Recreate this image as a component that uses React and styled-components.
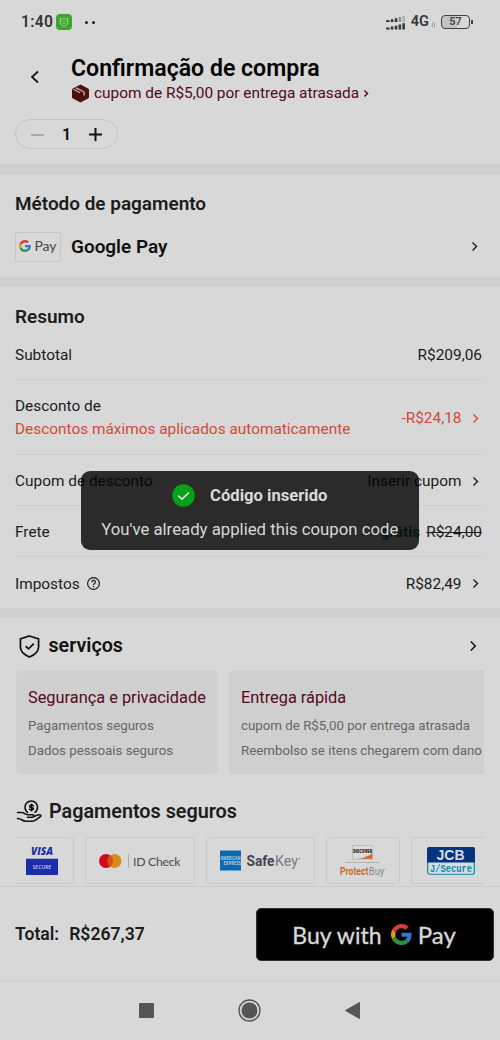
import React from 'react'
import styled, { createGlobalStyle } from 'styled-components'

const GlobalStyle = createGlobalStyle`
  * {
    box-sizing: border-box;
  }

  body {
    margin: 0;
    background: #d8d8d8;
    color: #1c1c1c;
    font-family: Roboto, sans-serif;
    overflow: hidden;
  }
`

const Screen = styled.div`
  position: relative;
  display: flex;
  flex-direction: column;
  width: 500px;
  height: 1040px;
  overflow: hidden;
  background: #d8d8d8;
`

const Text = styled.span`
  display: block;
  flex: none;
  white-space: nowrap;
  font-family: ${({ $font }) => $font || 'Roboto'}, sans-serif;
  font-size: ${({ $size }) => $size || 15.4}px;
  font-weight: ${({ $weight }) => $weight || 400};
  letter-spacing: ${({ $spacing }) => $spacing || 0}px;
  line-height: ${({ $line }) => $line || 20}px;
  color: ${({ $color }) => $color || '#1c1c1c'};
`

const Icon = styled.svg`
  display: block;
  flex: none;
  overflow: visible;
`

const StatusBar = styled.div`
  display: flex;
  align-items: center;
  justify-content: space-between;
  height: 44px;
  padding: 0 30px 0 21px;
`

const StatusGroup = styled.div`
  display: flex;
  align-items: center;
`

const NetworkLabel = styled(Text)`
  margin-left: 6px;
`

const DataArrows = styled(Icon)`
  margin: 5px 0 0 2px;
`

const AppBadge = styled.div`
  display: flex;
  align-items: center;
  justify-content: center;
  width: 16px;
  height: 16px;
  margin-left: 3px;
  border-radius: 4px;
  background: #43a42f;
`

const Dots = styled.div`
  display: flex;
  gap: 4px;
  margin-left: 13px;

  i {
    width: 3px;
    height: 3px;
    border-radius: 50%;
    background: #222;
  }
`

const Battery = styled.div`
  position: relative;
  display: flex;
  align-items: center;
  justify-content: center;
  width: 29px;
  height: 14px;
  margin-left: 5px;
  border: 1.6px solid #3f423f;
  border-radius: 4px;
  background: linear-gradient(90deg, #c3c3c3 57%, #d8d8d8 57%);

  &::after {
    content: '';
    position: absolute;
    right: -4px;
    width: 2px;
    height: 4px;
    background: #3f423f;
  }
`

const Header = styled.header`
  display: flex;
  height: 75px;
  padding: 12px 16px 0 30px;
`

const BackButton = styled.div`
  width: 41px;
  padding-top: 15px;
`

const HeaderNote = styled.div`
  display: flex;
  align-items: center;
  gap: 5px;
  height: 22px;
`

const StepperRow = styled.div`
  height: 45px;
  padding-left: 15px;
`

const Stepper = styled.div`
  display: flex;
  align-items: center;
  justify-content: space-between;
  width: 103px;
  height: 30px;
  padding: 1px 15px 0;
  border: 1px solid #c4c4c4;
  border-radius: 15px;
`

const Divider = styled.div`
  flex: none;
  height: ${({ $height }) => $height || 10}px;
  background: #cfcfcf;
`

const PaymentMethod = styled.section`
  height: 102px;
  padding: 17px 23px 0 15px;
`

const MethodRow = styled.div`
  display: flex;
  align-items: center;
  gap: 10px;
  height: 31px;
  margin-top: 15px;
`

const MethodLogo = styled.div`
  display: flex;
  align-items: center;
  justify-content: center;
  gap: 3px;
  width: 46px;
  height: 30px;
  padding-bottom: 2px;
  border: 1px solid #c6c6c6;
  border-radius: 2px;
`

const Push = styled.div`
  margin-left: auto;
  padding-right: ${({ $inset }) => $inset || 0}px;
`

const Summary = styled.section`
  height: 321px;
  padding: 17px 16px 0 15px;
`

const SummaryRow = styled.div`
  display: flex;
  align-items: center;
  justify-content: space-between;
  height: ${({ $height }) => $height || 51}px;
  padding-top: 2px;
  padding-right: ${({ $inset }) => $inset || 0}px;
  border-bottom: ${({ $last }) => ($last ? '0' : '1px solid #cdcdcd')};
`

const Value = styled.div`
  display: flex;
  align-items: center;
  gap: ${({ $gap }) => $gap || 11.5}px;
`

const Strike = styled(Text)`
  text-decoration: line-through;
`

const Services = styled.section`
  height: 156px;
  padding: 15px 16px 0;
`

const SectionTitle = styled.div`
  display: flex;
  align-items: center;
  height: 26px;
  gap: ${({ $gap }) => $gap || 7}px;
  padding-left: ${({ $inset }) => $inset || 0}px;
`

const CardStrip = styled.div`
  display: flex;
  gap: 11px;
  margin-top: 11px;
  overflow: hidden;
`

const ServiceCard = styled.div`
  flex: none;
  width: ${({ $width }) => $width}px;
  height: 104px;
  padding: 17px 12px 0;
  border-radius: 5px;
  background: #cfcfcf;
`

const Payments = styled.section`
  height: 112px;
  padding: 25px 16px 0;
`

const BrandStrip = styled.div`
  display: flex;
  gap: 11px;
  margin-top: 12px;
  overflow: hidden;
`

const BrandCard = styled.div`
  display: flex;
  flex: none;
  align-items: center;
  justify-content: center;
  width: ${({ $width }) => $width}px;
  height: 47px;
  padding-right: ${({ $cutLeft }) => ($cutLeft ? 5 : 0)}px;
  border: 1px solid #cacaca;
  border-left-width: ${({ $cutLeft }) => ($cutLeft ? 0 : 1)}px;
  border-right-width: ${({ $cutRight }) => ($cutRight ? 0 : 1)}px;
  border-radius: ${({ $cutLeft, $cutRight }) =>
    $cutLeft ? '0 3px 3px 0' : $cutRight ? '3px 0 0 3px' : '3px'};
`

const Checkout = styled.footer`
  display: flex;
  align-items: flex-start;
  justify-content: space-between;
  height: 94px;
  padding: 21px 6px 0 15px;
  border-top: 1px solid #cbcbcb;
`

const Total = styled.div`
  display: flex;
  gap: 10px;
  padding-top: 16px;
`

const BuyButton = styled.div`
  display: flex;
  align-items: center;
  justify-content: center;
  gap: ${({ $gap }) => $gap || 0}px;
  width: 238px;
  height: 53px;
  padding-right: 2px;
  border-radius: 5px;
  border: 1px solid #333;
  background: #000;
`

const PayMark = styled.div`
  display: flex;
  align-items: center;
  gap: 6px;
`

const ButtonText = styled(Text)`
  -webkit-text-stroke: 0.35px #d8d8d8;
`

const NavBar = styled.nav`
  display: flex;
  align-items: center;
  justify-content: center;
  gap: 84px;
  height: 60px;
  padding: 0 2px 1px 0;
  border-top: 1px solid #cecece;
`

const Toast = styled.div`
  position: absolute;
  top: 471px;
  left: 80.5px;
  display: flex;
  flex-direction: column;
  align-items: center;
  width: 338.5px;
  height: 78.5px;
  padding-top: 13px;
  border-radius: 9px;
  background: rgba(0, 0, 0, 0.8);
`

const ToastTitle = styled.div`
  display: flex;
  align-items: center;
  gap: 15px;
  height: 23px;
  margin-bottom: 12px;

  span {
    padding-top: 1px;
  }
`

const Chevron = ({ color = '#1c1c1c', width = 5, height = 9, stroke = 1.4 }) => (
  <Icon width={width} height={height} viewBox="0 0 5 9" fill="none" stroke={color} strokeWidth={stroke}>
    <path d="M.5.5 4.5 4.5.5 8.5" />
  </Icon>
)

const GoogleG = ({ size }) => (
  <Icon width={size} height={size} viewBox="0 0 48 48">
    <path fill="#d23f33" d="M24 9.5c3.54 0 6.71 1.22 9.21 3.6l6.85-6.85C35.9 2.38 30.47 0 24 0 14.62 0 6.51 5.38 2.56 13.22l7.98 6.19C12.43 13.72 17.74 9.5 24 9.5z" />
    <path fill="#3a72d0" d="M46.98 24.55c0-1.57-.15-3.09-.38-4.55H24v9.02h12.94c-.58 2.96-2.26 5.48-4.78 7.18l7.73 6c4.51-4.18 7.09-10.36 7.09-17.65z" />
    <path fill="#d8a406" d="M10.53 28.59A14.5 14.5 0 0 1 9.77 24c0-1.6.27-3.14.76-4.59l-7.98-6.19A23.9 23.9 0 0 0 0 24c0 3.88.92 7.54 2.56 10.78z" />
    <path fill="#2e9048" d="M24 48c6.48 0 11.93-2.13 15.89-5.81l-7.73-6c-2.15 1.45-4.92 2.3-8.16 2.3-6.26 0-11.57-4.22-13.47-9.91l-7.98 6.19C6.51 42.62 14.62 48 24 48z" />
  </Icon>
)

const SignalIcon = () => (
  <Icon width="19" height="15" viewBox="0 0 19 15" fill="#333633">
    <path d="M0 5.2h3.6V7H0zM4.8 4.2h2.6V7H4.800zM8.800 3.300h2.500V7H8.800z" />
    <path fill="#8c8d8c" d="M12.700 2h2.300v5h-2.300z" />
    <path fill="#b0b0b0" d="M16.400.8h2.500V7h-2.500z" />
    <path d="M0 12.600h3.600v1.900H0zM4.800 11.600h2.600v2.900H4.800zM8.800 10.800h2.500v3.700H8.800zM12.600 9.500h2.500v5h-2.500zM16.400 8.300h2.500v6.200h-2.500z" />
  </Icon>
)

const BoxIcon = () => (
  <Icon width="18" height="19" viewBox="0 0 18 19">
    <path fill="#4d120b" stroke="#4d120b" strokeLinejoin="round" d="m9.500 1 8 4.200v8.600l-8 4.200-8-4.200V5.200z" />
    <path fill="none" stroke="#cdb3ae" strokeWidth="1.300" d="m5 3.800 7.200 3.700q1 .5 1 1.700v2.300M2.500 5.200l6.500 3.500" />
  </Icon>
)

const HelpIcon = () => (
  <Icon width="13" height="13" viewBox="0 0 13 13" fill="none" stroke="#1c1c1c" strokeWidth="1.200">
    <circle cx="6.500" cy="6.500" r="5.900" />
    <path d="M4.700 5.200c0-2.400 3.700-2.300 3.700-.1 0 1.500-1.900 1.400-1.900 2.900M6.500 8.900v1.300" />
  </Icon>
)

const ShieldIcon = () => (
  <Icon width="21" height="23" viewBox="0 0 22 24" fill="none" stroke="#111" strokeWidth="1.800">
    <path d="M11 1 20.500 4v8.500c0 5-4.300 8.300-9.500 10.500-5.200-2.200-9.500-5.500-9.500-10.500V4z" />
    <path d="m7 11.500 3 3 5.500-5.500" />
  </Icon>
)

const HandCoinIcon = () => (
  <Icon width="26" height="22" viewBox="0 0 26 22" fill="none" stroke="#111" strokeWidth="1.600" strokeLinecap="round" strokeLinejoin="round">
    <path d="M11.500 11.300a6.300 6.300 0 1 1 7.500 0" />
    <path d="M17.300 4.800c-1-1-3.600-.9-3.600.6 0 1.700 3.700.8 3.700 2.400 0 1.400-2.700 1.600-3.800.5M15.500 3.300v6.500" />
    <path d="M1.500 11.500h4c3 0 3.500 2.300 7 2.300h4c1.800 0 1.800 2.400 0 2.400h-5M1.500 17.500c4.500 0 4.500 2.700 8 2.700h7c2.500 0 5.500-2.700 8.500-5.200-.5-2-3-1.300-6.500.2" />
  </Icon>
)

const VisaLogo = () => (
  <Icon width="32" height="30" viewBox="0 0 32 30">
    <text x="5" y="9" textLength="22" lengthAdjust="spacingAndGlyphs" fontFamily="Open Sans, sans-serif" fontSize="10.500" fontWeight="800" fontStyle="italic" fill="#1a2eaa">VISA</text>
    <path fill="#1a2eaa" d="M0 12.700h32v16.300H0z" />
    <text x="6.500" y="23" textLength="19" lengthAdjust="spacingAndGlyphs" fontFamily="Open Sans, sans-serif" fontSize="5.500" fontWeight="600" fill="#c9cbe2">SECURE</text>
  </Icon>
)

const MastercardLogo = () => (
  <Icon width="82" height="16" viewBox="0 0 82 16">
    <circle cx="7" cy="8" r="7" fill="#cf0a20" />
    <circle cx="15.500" cy="8" r="7" fill="#d88a1c" />
    <path fill="#d55012" d="M11.250 2.400a7 7 0 0 1 0 11.200 7 7 0 0 1 0-11.200z" />
    <path stroke="#aaa" d="M29.500 1v14" />
    <text x="34" y="12.500" textLength="47.500" fontFamily="Lato, sans-serif" fontSize="12.300" fill="#4b4b4b">ID Check</text>
  </Icon>
)

const SafeKeyLogo = () => (
  <Icon width="81" height="21" viewBox="0 0 81 21">
    <path fill="#0c68b0" d="M0 .5h21v20H0z" />
    <g fontFamily="Open Sans, sans-serif" fontSize="4.800" fontWeight="700" fill="#b8cfdf">
      <text x=".5" y="9.800" textLength="20" lengthAdjust="spacingAndGlyphs">AMERICAN</text>
      <text x="3.500" y="15" textLength="17.500" lengthAdjust="spacingAndGlyphs">EXPRESS</text>
    </g>
    <text x="26.500" y="15.700" textLength="28" lengthAdjust="spacingAndGlyphs" fontFamily="Roboto, sans-serif" fontSize="14.500" fontWeight="700" fill="#3f444f">Safe</text>
    <text x="55" y="15.700" textLength="23" lengthAdjust="spacingAndGlyphs" fontFamily="Roboto, sans-serif" fontSize="14.500" fill="#777a80">Key</text>
    <circle cx="79.500" cy="8.500" r=".7" fill="#888" />
  </Icon>
)

const DiscoverLogo = () => (
  <Icon width="46" height="31" viewBox="0 0 46 31">
    <path fill="#dcdcdc" stroke="#aaa" strokeWidth=".6" d="M12.500.5h20V14h-20z" />
    <path fill="#cf6820" d="M32.300 8.500v5.300H17c6-.6 11-2.300 15.300-5.300z" />
    <text x="13" y="7.800" textLength="19" lengthAdjust="spacingAndGlyphs" fontFamily="Open Sans, sans-serif" fontSize="4.800" fontWeight="800" fill="#222">DISCOVER</text>
    <circle cx="23.200" cy="6.100" r="1.600" fill="#cf6820" />
    <path stroke="#aaa" strokeWidth=".8" d="M5.500 17.500h34" />
    <text x="0" y="29.500" textLength="28.300" lengthAdjust="spacingAndGlyphs" fontFamily="Roboto, sans-serif" fontSize="10.800" fontWeight="700" fill="#cb6a25">Protect</text>
    <text x="28.800" y="29.500" textLength="15.500" lengthAdjust="spacingAndGlyphs" fontFamily="Roboto, sans-serif" fontSize="10.800" fill="#85878a">Buy</text>
    <circle cx="45" cy="24" r=".5" fill="#888" />
  </Icon>
)

const JcbLogo = () => (
  <Icon width="48" height="28" viewBox="0 0 48 28">
    <rect x=".75" y=".75" width="46.500" height="26.500" rx="2" fill="#d4dde0" stroke="#1588aa" strokeWidth="1.200" />
    <path fill="#04337f" d="M2 0h44q2 0 2 2v13.500H0V2q0-2 2-2z" />
    <text x="9.500" y="12.500" textLength="28" lengthAdjust="spacingAndGlyphs" fontFamily="Liberation Sans, sans-serif" fontSize="14.500" fontWeight="700" fill="#d9dce2">JCB</text>
    <text x="3" y="24.600" textLength="42" lengthAdjust="spacingAndGlyphs" fontFamily="Liberation Mono, monospace" fontSize="11.500" fontWeight="700" fill="#1588aa">J/Secure</text>
  </Icon>
)

const App = () => (
  <>
    <GlobalStyle />
    <Screen>
      <StatusBar>
        <StatusGroup>
          <Text $size={15.6} $weight={600} $spacing={0.35} $color="#333633">1:40</Text>
          <AppBadge>
            <Icon width="10" height="10" viewBox="0 0 10 10" fill="none" stroke="#a5d99a" strokeWidth=".9">
              <path d="M2.500 2 1.500 1v5c0 4 7 4 7 0V1l-1 1zM1 4.500h1M8 4.500h1M3.500 4v1M6.500 4v1M4 6.500h2" />
            </Icon>
          </AppBadge>
          <Dots>
            <i />
            <i />
          </Dots>
        </StatusGroup>
        <StatusGroup>
          <SignalIcon />
          <NetworkLabel $size={14.5} $weight={600} $color="#333633">4G</NetworkLabel>
          <DataArrows width="5" height="6" viewBox="0 0 5 6" fill="none" stroke="#999" strokeWidth=".8">
            <path d="M1.500 0v5L.3 3.800M3.500 6V1l1.200 1.200" />
          </DataArrows>
          <Battery>
            <Text $size={10.8} $weight={600} $line={12} $color="#444">57</Text>
          </Battery>
        </StatusGroup>
      </StatusBar>

      <Header>
        <BackButton>
          <Icon width="9" height="12" viewBox="0 0 9 12" fill="none" stroke="#111" strokeWidth="1.700">
            <path d="M8 .5 2 6l6 5.500" />
          </Icon>
        </BackButton>
        <div>
          <Text $size={23.1} $weight={600} $line={26} $color="#000">Confirmação de compra</Text>
          <HeaderNote>
            <BoxIcon />
            <Text $color="#4d0a1b">cupom de R$5,00 por entrega atrasada</Text>
            <Chevron color="#4d0a1b" width={4} height={7} stroke={1.8} />
          </HeaderNote>
        </div>
      </Header>
      <StepperRow>
        <Stepper>
          <Icon width="13" height="2"><path fill="#aaa" d="M0 0h13v2H0z" /></Icon>
          <Text $size={16} $weight={600} $color="#111">1</Text>
          <Icon width="13" height="13"><path fill="#111" d="M0 5.500h13v2H0zM5.500 0h2v13h-2z" /></Icon>
        </Stepper>
      </StepperRow>
      <Divider $height={11} />

      <PaymentMethod>
        <Text $size={18.95} $weight={600} $line={24}>Método de pagamento</Text>
        <MethodRow>
          <MethodLogo>
            <GoogleG size={12} />
            <Text $font="Lato" $size={14} $color="#454545">Pay</Text>
          </MethodLogo>
          <Text $size={18.95} $weight={600} $line={24} $color="#111">Google Pay</Text>
          <Push>
            <Chevron />
          </Push>
        </MethodRow>
      </PaymentMethod>
      <Divider />

      <Summary>
        <Text $size={18.95} $weight={600} $line={25}>Resumo</Text>
        <SummaryRow $inset={2}>
          <Text>Subtotal</Text>
          <Text>R$209,06</Text>
        </SummaryRow>
        <SummaryRow $height={75} $inset={6}>
          <div>
            <Text $line={23}>Desconto de</Text>
            <Text $line={23} $color="#cf4b38">Descontos máximos aplicados automaticamente</Text>
          </div>
          <Value>
            <Text $color="#cf4b38">-R$24,18</Text>
            <Chevron color="#cf4b38" />
          </Value>
        </SummaryRow>
        <SummaryRow $inset={6}>
          <Text>Cupom de desconto</Text>
          <Value>
            <Text>Inserir cupom</Text>
            <Chevron />
          </Value>
        </SummaryRow>
        <SummaryRow $inset={2}>
          <Text>Frete</Text>
          <Value $gap={6}>
            <Text $weight={700} $color="#087443">grátis</Text>
            <Strike>R$24,00</Strike>
          </Value>
        </SummaryRow>
        <SummaryRow $inset={6} $last>
          <Value $gap={7}>
            <Text>Impostos</Text>
            <HelpIcon />
          </Value>
          <Value>
            <Text>R$82,49</Text>
            <Chevron />
          </Value>
        </SummaryRow>
      </Summary>
      <Divider />

      <Services>
        <SectionTitle $inset={3} $gap={8.5}>
          <ShieldIcon />
          <Text $size={19.7} $weight={600} $line={24} $color="#111">serviços</Text>
          <Push $inset={8}>
            <Chevron width={6} height={10} color="#111" />
          </Push>
        </SectionTitle>
        <CardStrip>
          <ServiceCard $width={202}>
            <Text $size={16.35} $line={21} $color="#560a20">Segurança e privacidade</Text>
            <Text $size={13.3} $line={35} $color="#666">Pagamentos seguros</Text>
            <Text $size={13.3} $line={15} $color="#666">Dados pessoais seguros</Text>
          </ServiceCard>
          <ServiceCard $width={290}>
            <Text $size={16.35} $line={21} $color="#560a20">Entrega rápida</Text>
            <Text $size={13.3} $line={35} $color="#666">cupom de R$5,00 por entrega atrasada</Text>
            <Text $size={13.3} $line={15} $color="#666">Reembolso se itens chegarem com dano</Text>
          </ServiceCard>
        </CardStrip>
      </Services>

      <Payments>
        <SectionTitle>
          <HandCoinIcon />
          <Text $size={19.8} $weight={600} $line={24}>Pagamentos seguros</Text>
        </SectionTitle>
        <BrandStrip>
          <BrandCard $width={58} $cutLeft><VisaLogo /></BrandCard>
          <BrandCard $width={110}><MastercardLogo /></BrandCard>
          <BrandCard $width={109}><SafeKeyLogo /></BrandCard>
          <BrandCard $width={74}><DiscoverLogo /></BrandCard>
          <BrandCard $width={78} $cutRight><JcbLogo /></BrandCard>
        </BrandStrip>
      </Payments>

      <Checkout>
        <Total>
          <Text $size={17.6} $weight={600}>Total:</Text>
          <Text $size={17.6} $weight={600}>R$267,37</Text>
        </Total>
        <BuyButton $gap={9}>
          <ButtonText $font="Lato" $size={23} $line={28} $spacing={0.1} $color="#d8d8d8">Buy with</ButtonText>
          <PayMark>
            <GoogleG size={21} />
            <ButtonText $font="Lato" $size={24} $line={28} $color="#d8d8d8">Pay</ButtonText>
          </PayMark>
        </BuyButton>
      </Checkout>

      <NavBar>
        <Icon width="15" height="15"><rect width="15" height="15" rx="1" fill="#555" /></Icon>
        <Icon width="23" height="23">
          <circle cx="11.500" cy="11.500" r="10.500" fill="none" stroke="#555" strokeWidth="1.400" />
          <circle cx="11.500" cy="11.500" r="8" fill="#555" />
        </Icon>
        <Icon width="15" height="17"><path fill="#555" d="M14.500.5v16L.5 8.500z" stroke="#555" strokeLinejoin="round" /></Icon>
      </NavBar>

      <Toast>
        <ToastTitle>
          <Icon width="23" height="23">
            <circle cx="11.500" cy="11.500" r="11.300" fill="#08a019" />
            <path d="m6 11.500 4 3.700 7-6.700" fill="none" stroke="#d9ead9" strokeWidth="1.600" />
          </Icon>
          <Text $size={16.6} $weight={700} $color="#dadada">Código inserido</Text>
        </ToastTitle>
        <Text $size={16.75} $color="#d8d8d8">You've already applied this coupon code</Text>
      </Toast>
    </Screen>
  </>
)

export default App
